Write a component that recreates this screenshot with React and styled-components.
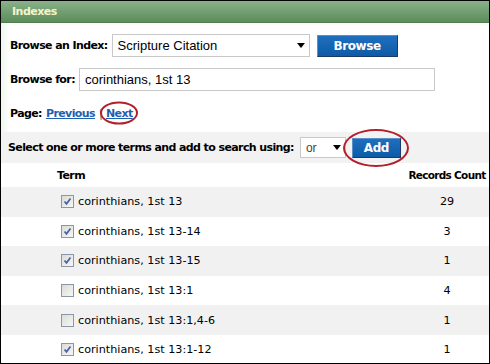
import React from 'react';
import styled, { createGlobalStyle } from 'styled-components';

const GlobalStyle = createGlobalStyle`
    html, body {
        margin: 0;
        padding: 0;
        background: #fff;
    }
`;

const terms = [
    { term: 'corinthians, 1st 13', count: 29, checked: true },
    { term: 'corinthians, 1st 13-14', count: 3, checked: true },
    { term: 'corinthians, 1st 13-15', count: 1, checked: true },
    { term: 'corinthians, 1st 13:1', count: 4, checked: false },
    { term: 'corinthians, 1st 13:1,4-6', count: 1, checked: false },
    { term: 'corinthians, 1st 13:1-12', count: 1, checked: true },
];

const Arrow = () => (
    <svg width="8" height="5" viewBox="0 0 8 5">
        <path d="M0 0 H8 L4 5 Z" fill="#000" />
    </svg>
);

const Check = ({ checked }) => (
    <Box>
        {checked && (
            <svg width="9" height="9" viewBox="0 0 9 9">
                <path d="M1.5 4.5 L3.5 6.8 L7.5 1.5" fill="none" stroke="#4a63a8" strokeWidth="1.8" />
            </svg>
        )}
    </Box>
);

const App = () => {
    return (
        <Frame>
            <GlobalStyle />

            <Header>Indexes</Header>

            <Form>
                <FormRow>
                    <Label>Browse an Index:</Label>
                    <Select $width={198}>
                        <span>Scripture Citation</span>
                        <Arrow />
                    </Select>
                    <Button $width={81}>Browse</Button>
                </FormRow>

                <FormRow $top={11}>
                    <Label>Browse for:</Label>
                    <Input>corinthians, 1st 13</Input>
                </FormRow>

                <PageRow>
                    <Label>Page:</Label>
                    <PageLink>Previous</PageLink>
                    <Divider>|</Divider>
                    <Circled $w={38} $h={23}>
                        <PageLink>Next</PageLink>
                    </Circled>
                </PageRow>
            </Form>

            <AddBar>
                <Label>Select one or more terms and add to search using:</Label>
                <Select $width={46} $small>
                    <span>or</span>
                    <Arrow />
                </Select>
                <Circled $w={66} $h={38}>
                    <Button $width={49} $small>Add</Button>
                </Circled>
            </AddBar>

            <Table>
                <HeadRow>
                    <TermHead>Term</TermHead>
                    <CountHead>Records Count</CountHead>
                </HeadRow>
                {terms.map((t, i) => (
                    <Row key={t.term} $odd={i % 2 === 0}>
                        <TermCell>
                            <Check checked={t.checked} />
                            {t.term}
                        </TermCell>
                        <CountCell>{t.count}</CountCell>
                    </Row>
                ))}
            </Table>
        </Frame>
    );
};

const Frame = styled.div`
    width: 490px;
    height: 364px;
    box-sizing: border-box;
    border: 1px solid #000;
    overflow: hidden;
    display: flex;
    flex-direction: column;
    font-family: "DejaVu Sans", Verdana, sans-serif;
    font-size: 11px;
    color: #000;
    background: #fff;
`;

const Header = styled.div`
    height: 22px;
    flex-shrink: 0;
    box-sizing: border-box;
    padding-left: 11px;
    display: flex;
    align-items: center;
    font-weight: bold;
    font-size: 11px;
    letter-spacing: -0.5px;
    color: #f4f4cc;
    background: linear-gradient(to bottom, #8bb18b 0%, #6f9d6f 55%, #5c8c5c 100%);
    border-bottom: 1px solid #4f7f4f;
`;

const Form = styled.div`
    padding: 11px 0 0 9px;
    background: linear-gradient(to right, #eef5ee 0, #fff 9px);
`;

const FormRow = styled.div`
    display: flex;
    align-items: center;
    gap: 4px;
    margin-top: ${p => p.$top || 0}px;
    height: 23px;
`;

const Label = styled.span`
    font-weight: bold;
    letter-spacing: -0.6px;
    white-space: nowrap;
`;

const Select = styled.div`
    width: ${p => p.$width}px;
    height: ${p => (p.$small ? 21 : 23)}px;
    box-sizing: border-box;
    border: 1px solid #c9c9c9;
    background: #fff;
    display: flex;
    align-items: center;
    justify-content: space-between;
    padding: 0 4px 0 5px;
    font-family: "Liberation Sans", Arial, sans-serif;
    font-size: ${p => (p.$small ? 12 : 13)}px;
    font-weight: normal;
    color: ${p => (p.$small ? '#444' : '#000')};
`;

const Button = styled.div`
    width: ${p => p.$width}px;
    height: ${p => (p.$small ? 20 : 22)}px;
    box-sizing: border-box;
    margin-left: ${p => (p.$small ? 0 : 3)}px;
    display: flex;
    align-items: center;
    justify-content: center;
    background: linear-gradient(to bottom, #1e6fbe 0%, #0d5ba8 100%);
    border: 1px solid #1b3a66;
    border-top-color: #5b8fc8;
    border-left-color: #5b8fc8;
    color: #fff;
    font-weight: bold;
    font-size: 12px;
    letter-spacing: -0.4px;
`;

const Input = styled.div`
    width: 356px;
    height: 23px;
    box-sizing: border-box;
    border: 1px solid #c9c9c9;
    display: flex;
    align-items: center;
    padding-left: 5px;
    font-family: "Liberation Sans", Arial, sans-serif;
    font-size: 13px;
`;

const PageRow = styled.div`
    display: flex;
    align-items: center;
    height: 22px;
    margin-top: 11px;
    padding-bottom: 8px;
    gap: 4px;
`;

const PageLink = styled.span`
    font-weight: bold;
    color: #1f5fb0;
    text-decoration: underline;
    letter-spacing: -0.6px;
`;

const Divider = styled.span`
    color: #777;
    font-weight: bold;
    margin-right: -1px;
`;

const Circled = styled.span`
    position: relative;
    display: inline-flex;
    align-items: center;
    justify-content: center;

    &::after {
        content: '';
        position: absolute;
        left: 50%;
        top: 50%;
        width: ${p => p.$w}px;
        height: ${p => p.$h}px;
        transform: translate(-50%, -50%);
        border: 2.5px solid #b3202c;
        border-radius: 50%;
        box-sizing: border-box;
    }
`;

const AddBar = styled.div`
    height: 31px;
    flex-shrink: 0;
    display: flex;
    align-items: center;
    gap: 6px;
    padding-left: 7px;
    background: #f2f2f2;
`;

const Table = styled.div`
    display: flex;
    flex-direction: column;
`;

const HeadRow = styled.div`
    height: 24px;
    display: flex;
    align-items: center;
    font-weight: bold;
    letter-spacing: -0.6px;
    white-space: nowrap;
`;

const TermHead = styled.div`
    flex: 1;
    padding-left: 56px;
`;

const CountHead = styled.div`
    width: 84px;
    text-align: center;
    font-size: 10.5px;
    letter-spacing: -0.7px;
`;

const Row = styled.div`
    height: 29.6px;
    display: flex;
    align-items: center;
    background: ${p => (p.$odd ? '#f1f1f1' : '#fff')};
    font-size: 11.2px;
`;

const TermCell = styled.div`
    flex: 1;
    display: flex;
    align-items: center;
    gap: 4px;
    padding-left: 60px;
`;

const CountCell = styled.div`
    width: 84px;
    text-align: center;
`;

const Box = styled.span`
    width: 13px;
    height: 13px;
    box-sizing: border-box;
    border: 1px solid #8b96a8;
    background: linear-gradient(135deg, #dcdcd6 0%, #f6f6f4 100%);
    display: inline-flex;
    align-items: center;
    justify-content: center;
`;

export default App;
